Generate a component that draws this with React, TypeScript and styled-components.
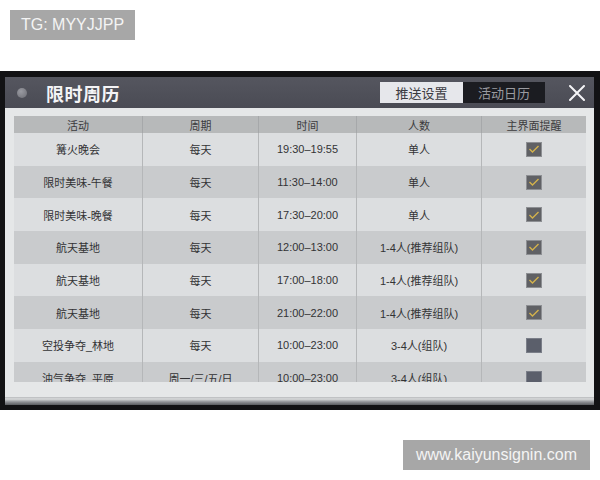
import React from "react";
import styled, { createGlobalStyle } from "styled-components";

const GlobalStyle = createGlobalStyle`
  html, body { margin: 0; padding: 0; background: #ffffff; }
  * { box-sizing: border-box; }
`;

const Page = styled.div`
  width: 600px;
  height: 480px;
  display: flex;
  flex-direction: column;
  padding-top: 10px;
  font-family: "Liberation Sans", "Noto Sans CJK SC", sans-serif;
  overflow: hidden;
`;

const Badge = styled.div<{ $right?: boolean }>`
  align-self: ${(p) => (p.$right ? "flex-end" : "flex-start")};
  margin: ${(p) => (p.$right ? "30px 10px 0 0" : "0 0 0 10px")};
  height: 30px;
  padding: 0 ${(p) => (p.$right ? "10px" : "10px")};
  width: ${(p) => (p.$right ? "187px" : "125px")};
  background: #a7a7a7;
  color: #f4f4f4;
  font-family: "Liberation Sans", sans-serif;
  font-size: 16px;
  display: flex;
  align-items: center;
  justify-content: center;
`;

const Photo = styled.div`
  margin-top: 31px;
  height: 339px;
  background: #121214;
  padding: 6px 6px 0 5px;
  display: flex;
  flex-direction: column;
`;

const Window = styled.div`
  display: flex;
  flex-direction: column;
  background: #e4e6e7;
`;

const Header = styled.div`
  height: 31px;
  background: linear-gradient(#55565f, #4a4b54);
  display: flex;
  align-items: center;
  padding-left: 12px;
  position: relative;
`;

const Dot = styled.div`
  width: 10px;
  height: 10px;
  border-radius: 50%;
  background: radial-gradient(circle at 40% 35%, #9a9ba2, #6c6d74);
`;

const Title = styled.div`
  margin-left: 19px;
  color: #f4f4f6;
  font-family: "Noto Sans CJK SC", sans-serif;
  font-size: 18px;
  font-weight: 700;
  letter-spacing: 0.5px;
`;

const Tabs = styled.div`
  margin-left: auto;
  display: flex;
  height: 21px;
`;

const Tab = styled.div<{ $active?: boolean }>`
  width: ${(p) => (p.$active ? "83px" : "82px")};
  display: flex;
  align-items: center;
  justify-content: center;
  background: ${(p) => (p.$active ? "#e6e7eb" : "#1b1c21")};
  color: ${(p) => (p.$active ? "#3a3a40" : "#9a9ba0")};
  font-family: "Noto Sans CJK SC", sans-serif;
  font-size: 13px;
`;

const Close = styled.div`
  width: 49px;
  display: flex;
  align-items: center;
  justify-content: center;
  padding-left: 14px;
`;

const Body = styled.div`
  height: 289px;
  padding: 8px 8px 15px 9px;
  background: #e5e7e8;
`;

const Viewport = styled.div`
  height: 266px;
  overflow: hidden;
`;

const Grid = styled.div`
  display: grid;
  grid-template-columns: 129px 116px 98px 125px 104px;
`;

const HeadCell = styled.div<{ $last?: boolean }>`
  height: 17px;
  background: #b7b9ba;
  color: #3c3c3e;
  font-family: "Noto Sans CJK SC", sans-serif;
  font-size: 11px;
  display: flex;
  align-items: center;
  justify-content: center;
  border-right: ${(p) => (p.$last ? "none" : "1px solid #a6a8aa")};
`;

const Cell = styled.div<{ $dark?: boolean; $last?: boolean }>`
  height: 32.7px;
  background: ${(p) => (p.$dark ? "#c9cbcd" : "#dcdee0")};
  color: #333335;
  font-size: 11px;
  display: flex;
  align-items: center;
  justify-content: center;
  border-right: ${(p) => (p.$last ? "none" : "1px solid #b5b7b9")};
  white-space: nowrap;
`;

const Box = styled.div<{ $checked?: boolean }>`
  width: 16px;
  height: 15px;
  background: ${(p) => (p.$checked ? "#606165" : "#5b5f6b")};
  border: 1px solid ${(p) => (p.$checked ? "#8d8f93" : "#7a7e88")};
  display: flex;
  align-items: center;
  justify-content: center;
`;

const Bottom = styled.div`
  height: 8px;
  background: linear-gradient(#b8babc 0, #d8dadb 2px, #8e9094 5px, #5a5c60 8px);
`;

type Row = [string, string, string, string, boolean];

const rows: Row[] = [
  ["篝火晚会", "每天", "19:30–19:55", "单人", true],
  ["限时美味-午餐", "每天", "11:30–14:00", "单人", true],
  ["限时美味-晚餐", "每天", "17:30–20:00", "单人", true],
  ["航天基地", "每天", "12:00–13:00", "1-4人(推荐组队)", true],
  ["航天基地", "每天", "17:00–18:00", "1-4人(推荐组队)", true],
  ["航天基地", "每天", "21:00–22:00", "1-4人(推荐组队)", true],
  ["空投争夺_林地", "每天", "10:00–23:00", "3-4人(组队)", false],
  ["油气争夺_平原", "周一/三/五/日", "10:00–23:00", "3-4人(组队)", false],
];

const heads = ["活动", "周期", "时间", "人数", "主界面提醒"];

export default function App() {
  return (
    <Page>
      <GlobalStyle />
      <Badge>TG: MYYJJPP</Badge>
      <Photo>
        <Window>
          <Header>
            <Dot />
            <Title>限时周历</Title>
            <Tabs>
              <Tab $active>推送设置</Tab>
              <Tab>活动日历</Tab>
            </Tabs>
            <Close>
              <svg width="16" height="16" viewBox="0 0 16 16">
                <path d="M1 1 L15 15 M15 1 L1 15" stroke="#f4f4f6" strokeWidth="2" strokeLinecap="round" />
              </svg>
            </Close>
          </Header>
          <Body>
            <Viewport>
              <Grid>
                {heads.map((h, i) => (
                  <HeadCell key={h} $last={i === heads.length - 1}>
                    {h}
                  </HeadCell>
                ))}
                {rows.map((r, ri) => {
                  const dark = ri % 2 === 1;
                  return (
                    <React.Fragment key={ri}>
                      <Cell $dark={dark}>{r[0]}</Cell>
                      <Cell $dark={dark}>{r[1]}</Cell>
                      <Cell $dark={dark}>{r[2]}</Cell>
                      <Cell $dark={dark}>{r[3]}</Cell>
                      <Cell $dark={dark} $last>
                        <Box $checked={r[4]}>
                          {r[4] && (
                            <svg width="12" height="10" viewBox="0 0 12 10">
                              <path d="M1.5 5 L4.5 8 L10.5 2" stroke="#d3b24c" strokeWidth="1.4" fill="none" />
                            </svg>
                          )}
                        </Box>
                      </Cell>
                    </React.Fragment>
                  );
                })}
              </Grid>
            </Viewport>
          </Body>
          <Bottom />
        </Window>
      </Photo>
      <Badge $right>www.kaiyunsignin.com</Badge>
    </Page>
  );
}
